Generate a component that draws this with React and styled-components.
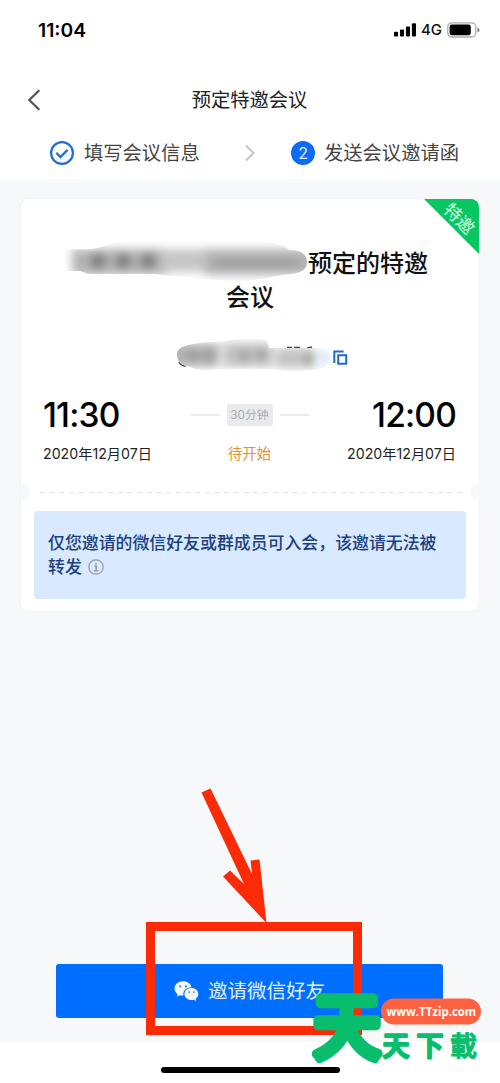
import React from "react";
import styled, { createGlobalStyle } from "styled-components";

const GlobalStyle = createGlobalStyle`
  * { box-sizing: border-box; }
  body {
    margin: 0;
    background: #fff;
    font-family: Inter, "Noto Sans CJK SC", sans-serif;
    color: #111;
  }
`;

const Screen = styled.div`
  position: relative;
  width: 500px;
  height: 1083px;
  display: flex;
  flex-direction: column;
  overflow: hidden;
  background: #fff;
`;

const StatusBar = styled.div`
  height: 60px;
  padding: 0 20px 0 38px;
  display: flex;
  align-items: center;
  justify-content: space-between;
`;

const Clock = styled.span`
  font-size: 19.3px;
  font-weight: 600;
  line-height: 24px;
  color: #000;
`;

const StatusIcons = styled.div`
  display: flex;
  align-items: center;
  gap: 5px;
`;

const Network = styled.span`
  font-size: 15px;
  font-weight: 500;
  line-height: 20px;
  color: #111;
`;

const NavBar = styled.div`
  height: 79px;
  padding: 0 28px 0 27px;
  display: grid;
  grid-template-columns: 14px 1fr 14px;
  align-items: center;
`;

const NavTitle = styled.h1`
  margin: 0;
  text-align: center;
  font-size: 19.3px;
  font-weight: 400;
  line-height: 28px;
  color: #222;
`;

const Steps = styled.div`
  height: 40px;
  padding: 0 41px 12px 49px;
  display: flex;
  align-items: center;
  justify-content: space-between;
`;

const Step = styled.div`
  display: flex;
  align-items: center;
  gap: 9px;
  font-size: 19.3px;
  line-height: 28px;
  color: #444;
`;

const StepNumber = styled.span`
  width: 24px;
  height: 24px;
  border-radius: 50%;
  background: #0a6cf5;
  color: #e2efff;
  font-size: 16px;
  line-height: 24px;
  text-align: center;
`;

const Body = styled.main`
  height: 863px;
  padding: 20px 21px 0;
  background: #f7f8fa;
  display: flex;
  flex-direction: column;
  justify-content: space-between;
`;

const Card = styled.section`
  position: relative;
  height: 412px;
  border-radius: 8px;
  background: #fff;
  box-shadow: 0 0 3px rgba(40, 50, 70, 0.05);
`;

const Ribbon = styled.div`
  position: absolute;
  top: 0;
  right: 0;
  width: 55px;
  height: 55px;
  overflow: hidden;
  border-top-right-radius: 8px;
  background: #08c763;
  clip-path: polygon(0 0, 100% 0, 100% 100%);
`;

const RibbonText = styled.span`
  position: absolute;
  left: 15px;
  top: 10px;
  width: 40px;
  text-align: center;
  font-size: 17.5px;
  line-height: 20px;
  color: #d8ffe8;
  transform: rotate(45deg);
`;

const Title = styled.div`
  padding-top: 48px;
  display: flex;
  flex-direction: column;
  align-items: center;
  font-size: 24px;
  font-weight: 500;
  line-height: 34px;
  color: #111;
`;

const TitleLine = styled.div`
  height: 34px;
  display: flex;
  align-items: center;
  margin-left: ${(p) => p.$shift || 0}px;
`;

const CodeRow = styled.div`
  height: 44px;
  margin-top: 20px;
  padding-left: 153px;
  display: flex;
  align-items: center;
`;

const Schedule = styled.div`
  margin-top: 9px;
  padding: 0 23px 0 22px;
  height: 95px;
  display: grid;
  grid-template-columns: 1fr auto 1fr;
  grid-template-rows: 54px 23px;
  align-items: center;
  justify-items: center;
  align-content: start;
`;

const Time = styled.div`
  justify-self: ${(p) => p.$side};
  font-size: 33.5px;
  font-weight: 500;
  line-height: 40px;
  letter-spacing: -0.8px;
  color: #000;
`;

const DateText = styled.div`
  justify-self: ${(p) => p.$side};
  font-size: 14.2px;
  line-height: 20px;
  color: #222;
  white-space: nowrap;
`;

const Duration = styled.div`
  display: flex;
  align-items: center;
  gap: 7px;
`;

const Dash = styled.span`
  width: 29px;
  height: 2px;
  background: #eaebed;
`;

const DurationTag = styled.span`
  width: 46px;
  height: 22px;
  border-radius: 2px;
  background: #e9eaed;
  color: #aaabb0;
  font-size: 11.8px;
  line-height: 22px;
  text-align: center;
`;

const State = styled.div`
  font-size: 14.3px;
  line-height: 20px;
  color: #e69138;
`;

const Tear = styled.div`
  height: 18px;
  display: flex;
  align-items: center;
  justify-content: space-between;
`;

const Notch = styled.span`
  width: 9px;
  height: 18px;
  background: #f7f8fa;
  border-radius: ${(p) => (p.$left ? "0 9px 9px 0" : "9px 0 0 9px")};
`;

const Perforation = styled.span`
  flex: 1;
  margin: 0 8px 0 10px;
  height: 1px;
  background: repeating-linear-gradient(90deg, #e2e3e5 0 5px, transparent 5px 9.7px);
`;

const Notice = styled.div`
  margin: 10px 13px 0;
  height: 88px;
  padding: 20px 14px;
  border-radius: 4px;
  background: #d9e9ff;
  color: #1b3f80;
  font-size: 16.9px;
  font-weight: 500;
  line-height: 24px;
  white-space: nowrap;
`;

const NoticeLine = styled.div`
  display: flex;
  align-items: center;
  gap: 6px;
`;

const InviteButton = styled.button`
  width: 387px;
  height: 54px;
  margin: 0 0 24px 35px;
  padding: 0;
  border: 0;
  border-radius: 3px;
  background: #006fff;
  color: #e4f0ff;
  font-family: inherit;
  font-size: 19.5px;
  line-height: 28px;
  display: flex;
  align-items: center;
  justify-content: center;
  gap: 9px;
`;

const HomeArea = styled.div`
  flex: 1;
  display: flex;
  justify-content: center;
  padding-top: 25px;
`;

const HomeIndicator = styled.div`
  width: 179px;
  height: 6px;
  border-radius: 3px;
  background: #000;
`;

const Highlight = styled.div`
  position: absolute;
  left: 146px;
  top: 922px;
  width: 216px;
  height: 113px;
  border: 9.5px solid #fb2b08;
`;

const Arrow = styled.svg`
  position: absolute;
  left: 195px;
  top: 782px;
`;

const Watermark = styled.svg`
  position: absolute;
  left: 308px;
  top: 965px;
  overflow: visible;
  font-family: "Noto Sans CJK TC", sans-serif;
`;

const LogoGlyph = styled.text`
  font-size: ${(p) => p.$size}px;
  font-weight: ${(p) => p.$weight || 500};
  text-anchor: middle;
  fill: #08bd6c;
  stroke: #08bd6c;
  stroke-width: ${(p) => p.$stroke}px;
  stroke-linejoin: round;
`;

const SiteName = styled.text`
  font-family: "Open Sans", sans-serif;
  font-size: 13px;
  font-weight: 700;
  fill: #fff;
`;

const BackIcon = () => (
  <svg width="14" height="22" viewBox="0 0 14 22" fill="none" stroke="#555" strokeWidth="2.2">
    <path d="M12.3 1.2 2.3 11l10 9.8" />
  </svg>
);

const CheckIcon = () => (
  <svg width="26" height="26" viewBox="0 0 26 26" fill="none" stroke="#226fd0" strokeWidth="2.3">
    <circle cx="13" cy="13" r="10.9" />
    <path d="m7.3 12.7 4.1 4.3 7.3-7.2" />
  </svg>
);

const StepArrowSvg = styled.svg`
  margin-left: 9px;
`;

const StepArrow = () => (
  <StepArrowSvg width="12" height="18" viewBox="0 0 12 18" fill="none" stroke="#c4c5c7" strokeWidth="2.1">
    <path d="m2 1.5 7.5 7.5L2 16.5" />
  </StepArrowSvg>
);

const SignalIcon = () => (
  <svg width="22" height="14" viewBox="0 0 22.5 14">
    <rect x="0" y="8.7" width="4.2" height="5" rx="1" />
    <rect x="6.1" y="6.4" width="4.2" height="7.3" rx="1" />
    <rect x="12.2" y="3.5" width="4.2" height="10.2" rx="1" />
    <rect x="18.3" y="0" width="4.2" height="13.7" rx="1" />
  </svg>
);

const BatteryIcon = () => (
  <svg width="33" height="16" viewBox="0 0 33 16">
    <rect x="0.8" y="0.8" width="28" height="14.2" rx="4" fill="none" stroke="#aaa" strokeWidth="1.3" />
    <rect x="2.6" y="2.6" width="21.2" height="10.6" rx="2.3" />
    <path d="M30.5 5.5q2 .6 2 2.4t-2 2.4z" fill="#777" />
  </svg>
);

const CopySvg = styled.svg`
  margin: 2px 0 0 1px;
`;

const CopyIcon = () => (
  <CopySvg width="15" height="16" viewBox="0 0 15 16" fill="none" stroke="#1d6acb" strokeWidth="2">
    <path d="M1.3 13V1.4h9.3M5.2 5.2h8v8.6h-8z" />
  </CopySvg>
);

const InfoIcon = () => (
  <svg width="16" height="16" viewBox="0 0 16 16" fill="none" stroke="#929ba9" strokeWidth="1.2">
    <circle cx="8" cy="8" r="7.2" />
    <path d="M8 3.7v1.8M6.3 7h1.9v4.7M6 11.8h4.3" strokeWidth="1.6" />
  </svg>
);

const WechatIcon = () => (
  <svg width="25" height="20" viewBox="0 0 25.2 20.7">
    <path fill="#f4f9ff" d="M9.2.3C4.1.3.2 3.6.2 7.8c0 2.4 1.2 4.4 3.2 5.8l-.8 2.6 3-1.5c1.2.3 2.4.5 3.9.4C8.4 10.1 12.4 6.300 17.800 6.400 17 2.800 13.500.3 9.200.3z" />
    <path fill="#f4f9ff" d="M17.700 7.200c-4.200 0-7.200 2.700-7.200 6.200s3.100 6.300 7.200 6.300c.9 0 1.800-.1 2.600-.4l2.400 1.300-.6-2.200c1.700-1.200 2.700-2.900 2.700-5 0-3.500-3.100-6.200-7.100-6.200z" />
    <g fill="#287dde">
      <circle cx="6.100" cy="5.500" r="1.100" /><circle cx="12" cy="5.500" r="1.100" />
      <circle cx="15.300" cy="11.500" r=".9" /><circle cx="20.200" cy="11.500" r=".9" />
    </g>
  </svg>
);

const NameSmear = () => (
  <svg width="244" height="46" viewBox="0 0 244 46">
    <defs>
      <clipPath id="name-shape">
        <path d="M0 9C10 7 25 10 37 6c18-7 40-8 60-8h90c20 3 34 6 38 11 12-1 18 5 18 12 0 7-5 11-16 12-14 1-30 6-50 7-20 0-50-3-87-7H24L16 30H0z" />
      </clipPath>
      <filter id="soft" x="-30%" y="-80%" width="160%" height="260%">
        <feGaussianBlur stdDeviation="5" />
      </filter>
    </defs>
    <g clipPath="url(#name-shape)">
      <g filter="url(#soft)">
        <rect x="8" y="8" width="95" height="26" fill="#b4b4b4" />
        <rect x="98" y="8" width="45" height="23" fill="#c6c6c6" />
        <rect x="141" y="8" width="110" height="26" fill="#b4b4b4" />
        <g fill="#7c7c7c">
          <circle cx="34" cy="20" r="8" /><circle cx="59" cy="20" r="8" />
          <circle cx="84" cy="20" r="8" />
        </g>
        <rect x="150" y="19" width="85" height="7" fill="#999" />
      </g>
    </g>
  </svg>
);

const CodeSmear = () => (
  <svg width="158" height="40" viewBox="0 0 158 40">
    <defs>
      <clipPath id="code-shape">
        <path d="M8 10c10-4 25-5 38-5 18-4 35-4 47-2l2 8 52 0c10 3 14 7 8 13-4 8-12 9-20 9-16 3-40-2-60-1H45C30 34 21 33 17 30 7 29 3 24 3 18c0-5 2-6 5-8z" />
      </clipPath>
    </defs>
    <path d="M5 25q2 4 7 4M113 10.500h5M120 10.500h6M133 11l5-1" stroke="#444" strokeWidth="1.500" fill="none" />
    <g clipPath="url(#code-shape)">
      <rect x="0" y="0" width="158" height="40" fill="#fff" />
      <g filter="url(#soft)">
        <rect x="-4" y="6" width="49" height="24" fill="#b2b2b2" />
        <rect x="49" y="6" width="49" height="24" fill="#c2c2c2" />
        <rect x="101" y="11" width="40" height="20" fill="#c4c4c4" />
        <rect x="147" y="13" width="8" height="17" fill="#cfe2ff" />
        <g fill="#909090">
          <circle cx="19" cy="19" r="5" /><circle cx="35" cy="19" r="5" />
          <circle cx="70" cy="19" r="5" /><circle cx="87" cy="18" r="5" />
          <circle cx="135" cy="22" r="5" />
        </g>
      </g>
    </g>
  </svg>
);

export default function App() {
  return (
    <Screen>
      <GlobalStyle />
      <StatusBar>
        <Clock>11:04</Clock>
        <StatusIcons>
          <SignalIcon />
          <Network>4G</Network>
          <BatteryIcon />
        </StatusIcons>
      </StatusBar>
      <NavBar>
        <BackIcon />
        <NavTitle>预定特邀会议</NavTitle>
      </NavBar>
      <Steps>
        <Step><CheckIcon />填写会议信息</Step>
        <StepArrow />
        <Step><StepNumber>2</StepNumber>发送会议邀请函</Step>
      </Steps>
      <Body>
        <Card>
          <Ribbon><RibbonText>特邀</RibbonText></Ribbon>
          <Title>
            <TitleLine $shift={-8}><NameSmear />预定的特邀</TitleLine>
            <TitleLine>会议</TitleLine>
          </Title>
          <CodeRow><CodeSmear /><CopyIcon /></CodeRow>
          <Schedule>
            <Time $side="start">11:30</Time>
            <Duration><Dash /><DurationTag>30分钟</DurationTag><Dash /></Duration>
            <Time $side="end">12:00</Time>
            <DateText $side="start">2020年12月07日</DateText>
            <State>待开始</State>
            <DateText $side="end">2020年12月07日</DateText>
          </Schedule>
          <Tear><Notch $left /><Perforation /><Notch /></Tear>
          <Notice>
            <NoticeLine>仅您邀请的微信好友或群成员可入会，该邀请无法被</NoticeLine>
            <NoticeLine>转发<InfoIcon /></NoticeLine>
          </Notice>
        </Card>
        <InviteButton><WechatIcon />邀请微信好友</InviteButton>
      </Body>
      <HomeArea><HomeIndicator /></HomeArea>
      <Highlight />
      <Arrow width="80" height="145" viewBox="0 0 80 145">
        <path fill="#fb2b08" d="M6.500 10.500 15.500 6.500 57 92 55.500 78.500 64.500 77.500 71.500 141 28 94.500 35 88.500 49 102z" />
      </Arrow>
      <Watermark width="188" height="116" viewBox="0 0 188 116">
        <LogoGlyph $size={67} $stroke={9} $weight={400} transform="translate(39 87) scale(1 1.06)">天</LogoGlyph>
        <LogoGlyph $size={27} $stroke={2.2} x="88" y="91">天</LogoGlyph>
        <LogoGlyph $size={27} $stroke={2.2} x="122" y="91">下</LogoGlyph>
        <LogoGlyph $size={27} $stroke={1.2} x="155.500" y="91">載</LogoGlyph>
        <rect x="73" y="33.500" width="100" height="26" rx="13" fill="#ff6240" />
        <SiteName transform="translate(78.500 51) scale(0.88 1)">www.TTzip.com</SiteName>
      </Watermark>
    </Screen>
  );
}
